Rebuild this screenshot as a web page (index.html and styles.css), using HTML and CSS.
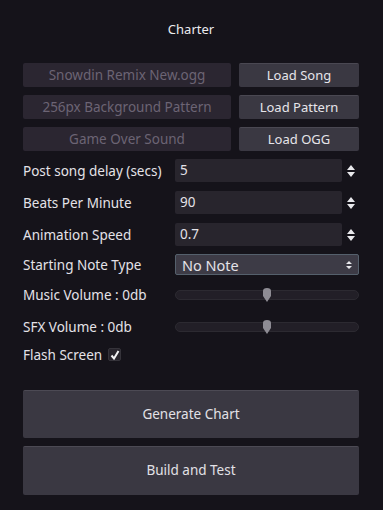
FILE: index.html
```html
<!DOCTYPE html>
<html>
<head>
<meta charset="utf-8">
<link rel="stylesheet" href="styles.css">
</head>
<body>
<div class="panel">
  <div class="title">Charter</div>
  <div class="files">
    <div class="filerow"><div class="field">Snowdin Remix New.ogg</div><div class="btn">Load Song</div></div>
    <div class="filerow"><div class="field">256px Background Pattern</div><div class="btn">Load Pattern</div></div>
    <div class="filerow"><div class="field">Game Over Sound</div><div class="btn">Load OGG</div></div>
  </div>
  <div class="spins">
    <div class="row"><div class="label">Post song delay (secs)</div><div class="spin"><div class="input">5</div><svg class="arrows" width="10" height="14" viewBox="0 0 10 14"><path d="M5 1 L9 6 H1 Z M1 8 H9 L5 13 Z" fill="#e8e8ec"/></svg></div></div>
    <div class="row"><div class="label">Beats Per Minute</div><div class="spin"><div class="input">90</div><svg class="arrows" width="10" height="14" viewBox="0 0 10 14"><path d="M5 1 L9 6 H1 Z M1 8 H9 L5 13 Z" fill="#e8e8ec"/></svg></div></div>
    <div class="row"><div class="label">Animation Speed</div><div class="spin"><div class="input">0.7</div><svg class="arrows" width="10" height="14" viewBox="0 0 10 14"><path d="M5 1 L9 6 H1 Z M1 8 H9 L5 13 Z" fill="#e8e8ec"/></svg></div></div>
    <div class="row optrow"><div class="label">Starting Note Type</div><div class="option"><span>No Note</span><svg class="optarrows" width="8" height="10" viewBox="0 0 8 10"><path d="M4 1 L7 4 H1 Z M1 6 H7 L4 9 Z" fill="#e8e8ec"/></svg></div></div>
  </div>
  <div class="sliders">
    <div class="row srow"><div class="label">Music Volume : 0db</div><div class="slider"><div class="track"></div><svg class="grab" width="10" height="14" viewBox="0 0 10 14"><path d="M5 14 L1 8 V3 Q1 0 5 0 Q9 0 9 3 V8 Z" fill="#8e8c94"/></svg></div></div>
    <div class="row srow"><div class="label">SFX Volume : 0db</div><div class="slider"><div class="track"></div><svg class="grab" width="10" height="14" viewBox="0 0 10 14"><path d="M5 14 L1 8 V3 Q1 0 5 0 Q9 0 9 3 V8 Z" fill="#8e8c94"/></svg></div></div>
    <div class="row checkrow"><div class="label">Flash Screen</div><div class="check"><svg width="10" height="10" viewBox="0 0 10 10"><path d="M1.5 5.5 L4 8.5 L8.5 1" stroke="#f2f2f4" stroke-width="2" fill="none"/></svg></div></div>
  </div>
  <div class="actions">
    <div class="bigbtn">Generate Chart</div>
    <div class="bigbtn">Build and Test</div>
  </div>
</div>
</body>
</html>
```
FILE: styles.css
```css
html, body {
  margin: 0;
  padding: 0;
  background: #15131a;
}
body {
  width: 383px;
  height: 510px;
  overflow: hidden;
  font-family: "Noto Sans", "Open Sans", sans-serif;
  font-size: 13.5px;
  color: #e4e2e8;
}
.panel {
  padding: 0 24px 0 23px;
  display: flex;
  flex-direction: column;
}
.title {
  height: 20px;
  margin-top: 19px;
  line-height: 20px;
  text-align: center;
  color: #ecebef;
  font-size: 13px;
}
.files {
  margin-top: 24px;
  display: flex;
  flex-direction: column;
  gap: 8px;
}
.filerow {
  display: flex;
  gap: 8px;
  height: 24px;
}
.field {
  width: 208px;
  background: #2b2631;
  border-radius: 2px;
  color: #6c6474;
  text-align: center;
  line-height: 24px;
}
.btn {
  flex: 1;
  background: #3a3842;
  border-top: 1px solid #4a4852;
  box-sizing: border-box;
  border-radius: 2px;
  text-align: center;
  line-height: 22px;
  color: #e6e5ea;
  font-size: 13px;
}
.spins {
  margin-top: 8px;
  display: flex;
  flex-direction: column;
  gap: 9px;
}
.row {
  display: flex;
  align-items: center;
  height: 23px;
}
.label {
  width: 152px;
  white-space: nowrap;
}
.spin {
  flex: 1;
  display: flex;
  align-items: center;
  height: 23px;
}
.input {
  width: 167px;
  height: 23px;
  background: #28252d;
  border-radius: 2px;
  box-sizing: border-box;
  padding-left: 5px;
  line-height: 23px;
}
.arrows {
  margin-left: 4px;
}
.optrow {
  height: 21px;
  margin-top: -1px;
}
.option {
  flex: 1;
  height: 21px;
  box-sizing: border-box;
  border: 1px solid #55606c;
  background: #3d3b46;
  border-radius: 2px;
  display: flex;
  align-items: center;
  justify-content: space-between;
  padding: 0 5px 0 6px;
  font-size: 14.5px;
}
.sliders {
  margin-top: 8px;
  display: flex;
  flex-direction: column;
  gap: 9px;
}
.srow {
  height: 23px;
}
.slider {
  flex: 1;
  position: relative;
  height: 14px;
  display: flex;
  align-items: center;
}
.track {
  width: 100%;
  height: 10px;
  border-radius: 5px;
  background: #221f27;
  border: 1px solid #2c2a31;
  box-sizing: border-box;
}
.grab {
  position: absolute;
  left: 87px;
  top: 0;
}
.checkrow {
  height: 21px;
  margin-top: -3px;
}
.checkrow .label {
  width: auto;
  margin-right: 6px;
}
.check {
  width: 13px;
  height: 13px;
  box-sizing: border-box;
  background: #27242c;
  border: 1px solid #35333a;
  border-radius: 2px;
  display: flex;
  align-items: center;
  justify-content: center;
}
.actions {
  margin-top: 25px;
  display: flex;
  flex-direction: column;
  gap: 8px;
}
.bigbtn {
  height: 48px;
  box-sizing: border-box;
  background: #3a3842;
  border-top: 1px solid #4c4a54;
  border-radius: 2px;
  text-align: center;
  line-height: 46px;
  color: #e2e1e6;
}
.bigbtn + .bigbtn {
  height: 49px;
}
```
